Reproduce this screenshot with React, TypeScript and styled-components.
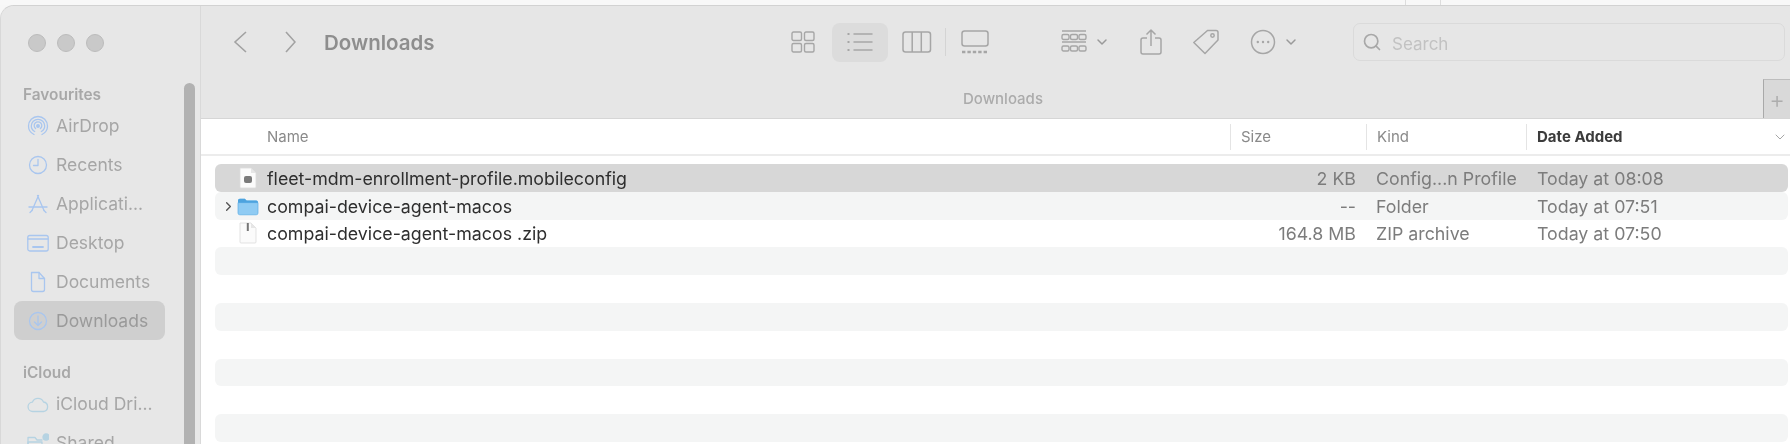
import React from 'react';
import styled, { createGlobalStyle } from 'styled-components';
import { ChevronDown, ChevronRight, Search } from 'lucide-react';

const GlobalStyle = createGlobalStyle`
    html, body {
        margin: 0;
        height: 100%;
        background: #f7f7f7;
        overflow: hidden;
    }
    body {
        font-family: Inter, "Liberation Sans", sans-serif;
    }
`;

const favourites = [
    { label: 'AirDrop', icon: 'airdrop' },
    { label: 'Recents', icon: 'recents' },
    { label: 'Applicati...', icon: 'apps' },
    { label: 'Desktop', icon: 'desktop' },
    { label: 'Documents', icon: 'doc' },
    { label: 'Downloads', icon: 'download', active: true },
];

const files = [
    { name: 'fleet-mdm-enrollment-profile.mobileconfig', size: '2 KB', kind: 'Config...n Profile', date: 'Today at 08:08', icon: 'config' },
    { name: 'compai-device-agent-macos', size: '--', kind: 'Folder', date: 'Today at 07:51', icon: 'folder' },
    { name: 'compai-device-agent-macos .zip', size: '164.8 MB', kind: 'ZIP archive', date: 'Today at 07:50', icon: 'zip' },
];

function SidebarIcon({ name }: { name: string }) {
    const blue = name === 'cloud' || name === 'shared' ? '#b6d3e2' : '#a9c6ef';
    return (
        <svg width="22" height="22" viewBox="0 0 22 22" fill="none" stroke={blue} strokeWidth="1.3" strokeLinecap="round" strokeLinejoin="round">
            {name === 'airdrop' && (
                <>
                    <path d="M7 19.5C3.5 17.8 1.5 14.5 1.5 11a9.5 9.5 0 0 1 19 0c0 3.5-2 6.8-5.5 8.500" />
                    <path d="M7.700 16.500C5.500 15.300 4.300 13.200 4.300 11a6.700 6.700 0 0 1 13.400 0c0 2.200-1.200 4.300-3.400 5.500" />
                    <path d="M8.600 13.600A3.800 3.800 0 1 1 13.400 13.600" />
                    <circle cx="11" cy="11" r="1.300" fill={blue} />
                </>
            )}
            {name === 'recents' && (
                <>
                    <circle cx="11" cy="11" r="8.500" />
                    <path d="M11 5.500V11.500H6.500" />
                </>
            )}
            {name === 'apps' && (
                <>
                    <path d="M11.500 2.500L5 17.500M10.500 2.500L17 17.500" />
                    <path d="M2 14H20" />
                    <path d="M3 19.500L5 17.500M19 19.500L17 17.500" />
                </>
            )}
            {name === 'desktop' && (
                <>
                    <rect x="0.800" y="3.500" width="20.400" height="15.500" rx="2" />
                    <path d="M1 7H21" />
                    <path d="M6 15H16" strokeWidth="1.800" />
                </>
            )}
            {name === 'doc' && (
                <>
                    <path d="M4.500 1.500H12L17.500 7.500V18.500a2 2 0 0 1-2 2H6.500a2 2 0 0 1-2-2Z" />
                    <path d="M12 1.500V7.500H17.500" />
                </>
            )}
            {name === 'download' && (
                <>
                    <circle cx="11" cy="11" r="8.500" />
                    <path d="M11 6V15.500M7.500 12L11 15.500L14.500 12" />
                </>
            )}
            {name === 'cloud' && <path d="M6 18.500a4.700 4.700 0 0 1-.500-9.400A6 6 0 0 1 16.500 9a4.800 4.800 0 0 1 0 9.500Z" />}
            {name === 'shared' && (
                <>
                    <path d="M1 19V5.500h7l2 2.500h5" />
                    <path d="M1 10H15V19H1Z" />
                    <circle cx="19" cy="5" r="3" fill={blue} />
                </>
            )}
        </svg>
    );
}

function FileIcon({ name }: { name: string }) {
    if (name === 'folder') {
        return (
            <svg width="22" height="20" viewBox="0 0 22 20">
                <path d="M1 4.500a1.800 1.800 0 0 1 1.800-1.800h5l1.800 1.800h9.600a1.800 1.800 0 0 1 1.800 1.800V17a1.800 1.800 0 0 1-1.800 1.800H2.800A1.800 1.800 0 0 1 1 17Z" fill="#8fcbf3" />
                <path d="M1 4.500a1.800 1.800 0 0 1 1.800-1.800h5l1.800 1.800h9.600a1.800 1.800 0 0 1 1.800 1.800V7H1Z" fill="#4da3de" />
                <path d="M1 17V6.600h20V17a1.800 1.800 0 0 1-1.800 1.800H2.800A1.800 1.800 0 0 1 1 17Z" fill="none" stroke="#5baee5" strokeWidth="0.700" />
            </svg>
        );
    }
    return (
        <svg width="20" height="22" viewBox="0 0 20 22">
            <path d="M2 1H13L18 6V20a1 1 0 0 1-1 1H3a1 1 0 0 1-1-1Z" fill="#fbfbfb" stroke="#dcdcdc" strokeWidth="0.800" />
            <path d="M13 1V6H18Z" fill="#e6e6e6" />
            {name === 'config' && <rect x="6" y="9" width="8" height="7" rx="2" fill="#7a7a7a" />}
            {name === 'zip' && <rect x="8.800" y="1" width="2" height="8" fill="#777" />}
        </svg>
    );
}

function App() {
    const emptyRows = Array.from({ length: 7 });
    return (
        <Page>
            <GlobalStyle />
            <TopEdge>
                <EdgeTick />
                <EdgeTick />
            </TopEdge>
            <Window>
                <Sidebar>
                    <Lights>
                        <Light />
                        <Light />
                        <Light />
                    </Lights>
                    <SectionTitle>Favourites</SectionTitle>
                    {favourites.map((item) => (
                        <SideItem key={item.label} $active={item.active}>
                            <SidebarIcon name={item.icon} />
                            <span>{item.label}</span>
                        </SideItem>
                    ))}
                    <SectionTitle $spaced>iCloud</SectionTitle>
                    <SideItem>
                        <SidebarIcon name="cloud" />
                        <span>iCloud Dri...</span>
                    </SideItem>
                    <SideItem>
                        <SidebarIcon name="shared" />
                        <span>Shared</span>
                    </SideItem>
                    <ScrollThumb />
                </Sidebar>
                <Main>
                    <Toolbar>
                        <NavButton $gap={16}>
                            <svg width="14" height="22" viewBox="0 0 14 22" fill="none" stroke="#a2a2a2" strokeWidth="1.600">
                                <path d="M13 1L2 11L13 21" />
                            </svg>
                        </NavButton>
                        <NavButton $gap={38}>
                            <svg width="11" height="22" viewBox="0 0 11 22" fill="none" stroke="#a2a2a2" strokeWidth="1.600">
                                <path d="M1 1L10 11L1 21" />
                            </svg>
                        </NavButton>
                        <WindowTitle>Downloads</WindowTitle>
                        <ViewSwitch>
                            <ViewButton>
                                <svg width="24" height="22" viewBox="0 0 24 22" fill="none" stroke="#a6a6a6" strokeWidth="1.400">
                                    <rect x="1" y="1" width="9.500" height="8.500" rx="1.500" />
                                    <rect x="13.500" y="1" width="9.500" height="8.500" rx="1.500" />
                                    <rect x="1" y="12.500" width="9.500" height="8.500" rx="1.500" />
                                    <rect x="13.500" y="12.500" width="9.500" height="8.500" rx="1.500" />
                                </svg>
                            </ViewButton>
                            <ViewButton $selected>
                                <svg width="26" height="20" viewBox="0 0 26 20" fill="none" stroke="#a6a6a6" strokeWidth="1.400">
                                    <path d="M6.500 2H25.500M6.500 10H25.500M6.500 18H25.500" />
                                    <path d="M0.500 2H2.500M0.500 10H2.500M0.500 18H2.500" strokeWidth="2" />
                                </svg>
                            </ViewButton>
                            <ViewButton>
                                <svg width="30" height="22" viewBox="0 0 30 22" fill="none" stroke="#a6a6a6" strokeWidth="1.500">
                                    <rect x="1" y="1" width="27.500" height="20" rx="2.500" />
                                    <path d="M10.200 1V21M19.300 1V21" />
                                </svg>
                            </ViewButton>
                            <ViewDivider />
                            <ViewButton>
                                <svg width="28" height="24" viewBox="0 0 28 24" fill="none" stroke="#a6a6a6" strokeWidth="1.500">
                                    <rect x="1" y="1" width="26" height="15" rx="2.500" />
                                    <path d="M1 22H27" strokeWidth="2.400" strokeDasharray="3.400 2" />
                                </svg>
                            </ViewButton>
                        </ViewSwitch>
                        <ActionGroup>
                            <ActionButton>
                                <svg width="26" height="24" viewBox="0 0 26 24" fill="none" stroke="#a6a6a6" strokeWidth="1.400">
                                    <path d="M1 1H25M1 12H25" />
                                    <rect x="1" y="4.500" width="7" height="5" rx="1.500" />
                                    <rect x="9.500" y="4.500" width="7" height="5" rx="1.500" />
                                    <rect x="18" y="4.500" width="7" height="5" rx="1.500" />
                                    <rect x="1" y="16" width="7" height="5" rx="1.500" />
                                    <rect x="9.500" y="16" width="7" height="5" rx="1.500" />
                                    <rect x="18" y="16" width="7" height="5" rx="1.500" />
                                </svg>
                                <ChevronDown size={16} color="#9a9a9a" strokeWidth={2.200} />
                            </ActionButton>
                            <ActionButton>
                                <svg width="22" height="26" viewBox="0 0 22 26" fill="none" stroke="#a6a6a6" strokeWidth="1.500" strokeLinejoin="round">
                                    <path d="M7 9H3a2 2 0 0 0-2 2V23a2 2 0 0 0 2 2H19a2 2 0 0 0 2-2V11a2 2 0 0 0-2-2H15" />
                                    <path d="M11 17V1.500M6.500 5.500L11 1L15.500 5.500" />
                                </svg>
                            </ActionButton>
                            <ActionButton>
                                <svg width="28" height="26" viewBox="0 0 28 26" fill="none" stroke="#a6a6a6" strokeWidth="1.500" strokeLinejoin="round">
                                    <path d="M15.500 1.500H24a2 2 0 0 1 2 2V11L13 24.500L1.800 13.500Z" />
                                    <circle cx="20.500" cy="6.500" r="1.700" />
                                </svg>
                            </ActionButton>
                            <ActionButton>
                                <svg width="26" height="26" viewBox="0 0 26 26" fill="none" stroke="#a6a6a6" strokeWidth="1.500">
                                    <circle cx="13" cy="13" r="11.500" />
                                    <circle cx="7.800" cy="13" r="1.200" fill="#a6a6a6" stroke="none" />
                                    <circle cx="13" cy="13" r="1.200" fill="#a6a6a6" stroke="none" />
                                    <circle cx="18.200" cy="13" r="1.200" fill="#a6a6a6" stroke="none" />
                                </svg>
                                <ChevronDown size={16} color="#9a9a9a" strokeWidth={2.200} />
                            </ActionButton>
                        </ActionGroup>
                        <SearchBox>
                            <Search size={20} color="#a8a8a8" strokeWidth={2} />
                            <SearchHint>Search</SearchHint>
                        </SearchBox>
                    </Toolbar>
                    <TabBar>
                        <TabTitle>Downloads</TabTitle>
                        <PlusTab>+</PlusTab>
                    </TabBar>
                    <HeaderRow>
                        <NameHead>Name</NameHead>
                        <SizeHead>Size</SizeHead>
                        <KindHead>Kind</KindHead>
                        <DateHead>Date Added<ChevronDown size={16} color="#a6a6a6" strokeWidth={1.500} /></DateHead>
                    </HeaderRow>
                    <List>
                        {files.map((file, i) => (
                            <Row key={file.name} $selected={i === 0} $striped={i === 1}>
                                <Disclosure>{file.icon === 'folder' && <ChevronRight size={15} color="#555" strokeWidth={2.200} />}</Disclosure>
                                <IconCell><FileIcon name={file.icon} /></IconCell>
                                <FileName>{file.name}</FileName>
                                <FileSize>{file.size}</FileSize>
                                <FileMeta>{file.kind}</FileMeta>
                                <FileMeta>{file.date}</FileMeta>
                            </Row>
                        ))}
                        {emptyRows.map((_, i) => (
                            <Row key={i} $striped={i % 2 === 0} />
                        ))}
                    </List>
                </Main>
            </Window>
        </Page>
    );
}

export default App;

const Page = styled.div`
    width: 1790px;
    height: 444px;
    overflow: hidden;
    filter: blur(0.45px);
`;

const TopEdge = styled.div`
    height: 5px;
    background: #f8f8f8;
    display: flex;
    gap: 34px;
    padding-left: 1405px;
`;

const EdgeTick = styled.div`
    width: 1px;
    background: #dddddd;
`;

const Window = styled.div`
    height: 439px;
    display: flex;
    overflow: hidden;
    background: #e6e6e6;
    border-top: 1px solid #d2d2d2;
    border-left: 1px solid #d8d8d8;
    border-top-left-radius: 14px;
    box-sizing: border-box;
`;

const Sidebar = styled.div`
    position: relative;
    flex-shrink: 0;
    width: 186px;
    padding-left: 13px;
    background: #e7e7e7;
    border-right: 1px solid #d9d9d9;
    color: #a6a6a6;
`;

const Lights = styled.div`
    display: flex;
    gap: 11px;
    padding: 28px 0 0 14px;
`;

const Light = styled.div`
    width: 16px;
    height: 16px;
    border-radius: 50%;
    background: #c9c9c9;
    border: 0.5px solid #bcbcbc;
`;

const SectionTitle = styled.div<{ $spaced?: boolean }>`
    font-size: 15.4px;
    font-weight: 600;
    line-height: 18px;
    margin: ${(p) => (p.$spaced ? '24px' : '34px')} 0 2px 9px;
    color: #a8a8a8;
`;

const SideItem = styled.div<{ $active?: boolean }>`
    width: 151px;
    height: 39px;
    display: flex;
    align-items: center;
    gap: 7px;
    padding-left: 13px;
    box-sizing: border-box;
    font-size: 17.5px;
    border-radius: 8px;
    background: ${(p) => (p.$active ? '#cfcfcf' : 'transparent')};
    color: ${(p) => (p.$active ? '#9a9a9a' : '#a6a6a6')};

    svg {
        flex-shrink: 0;
    }
`;

const ScrollThumb = styled.div`
    position: absolute;
    top: 77px;
    bottom: -10px;
    left: 183px;
    width: 11px;
    border-radius: 6px;
    background: #b2b2b2;
`;

const Main = styled.div`
    flex: 1;
    min-width: 0;
    display: flex;
    flex-direction: column;
    background: #ffffff;
`;

const Toolbar = styled.div`
    height: 56px;
    display: flex;
    align-items: center;
    background: #e6e6e6;
    padding: 16px 0 0 16px;
    box-sizing: border-box;
`;

const NavButton = styled.div<{ $gap?: number }>`
    display: flex;
    margin-left: ${(p) => p.$gap ?? 0}px;
`;

const WindowTitle = styled.div`
    width: 336px;
    margin-left: 28px;
    font-size: 20.5px;
    font-weight: 600;
    color: #8e8e8e;
`;

const ViewSwitch = styled.div`
    display: flex;
    align-items: center;
    margin-left: 131px;
`;

const ViewButton = styled.div<{ $selected?: boolean }>`
    height: 39px;
    width: ${(p) => (p.$selected ? '56px' : 'auto')};
    margin: 0 ${(p) => (p.$selected ? '14px' : '0')} 0 ${(p) => (p.$selected ? '17px' : '0')};
    display: flex;
    align-items: center;
    justify-content: center;
    border-radius: 8px;
    background: ${(p) => (p.$selected ? '#dcdcdc' : 'transparent')};
`;

const ViewDivider = styled.div`
    width: 1px;
    height: 28px;
    margin: 0 15px 0 13px;
    background: #d4d4d4;
`;

const ActionGroup = styled.div`
    display: flex;
    align-items: center;
    gap: 30px;
    margin-left: 72px;
`;

const ActionButton = styled.div`
    display: flex;
    align-items: center;
    gap: 7px;
`;

const SearchBox = styled.div`
    width: 432px;
    height: 38px;
    margin-left: 54px;
    display: flex;
    align-items: center;
    gap: 10px;
    padding-left: 8px;
    box-sizing: border-box;
    border: 1px solid #dadada;
    border-radius: 7px;
    font-size: 17px;
    color: #c2c2c2;
`;

const SearchHint = styled.span`
    padding-top: 3px;
`;

const TabBar = styled.div`
    height: 57px;
    display: flex;
    align-items: flex-end;
    background: #e6e6e6;
    border-bottom: 1px solid #d6d6d6;
    box-sizing: border-box;
`;

const TabTitle = styled.div`
    flex: 1;
    padding: 0 0 10px 42px;
    text-align: center;
    font-size: 15px;
    font-weight: 500;
    color: #ababab;
`;

const PlusTab = styled.div`
    width: 27px;
    height: 39px;
    display: flex;
    align-items: center;
    justify-content: center;
    background: #d9d9d9;
    border-top: 1px solid #bdbdbd;
    border-left: 1px solid #a9a9a9;
    box-sizing: border-box;
    font-size: 24px;
    font-weight: 300;
    color: #adadad;
`;

const HeaderRow = styled.div`
    height: 37px;
    display: grid;
    grid-template-columns: 1029px 136px 160px 1fr;
    align-items: center;
    border-bottom: 2px solid #ececec;
    box-sizing: border-box;
    font-size: 15px;
    color: #8a8a8a;
    background: #ffffff;
`;

const HeadCell = styled.div`
    height: 26px;
    display: flex;
    align-items: center;
    padding-left: 10px;
    border-left: 1px solid #e4e4e4;
`;

const NameHead = styled(HeadCell)`
    padding-left: 66px;
    border-left: 0;
`;

const SizeHead = styled(HeadCell)``;

const KindHead = styled(HeadCell)``;

const DateHead = styled(HeadCell)`
    justify-content: space-between;
    padding-right: 2px;
    font-weight: 700;
    color: #3c3c3c;
`;

const List = styled.div`
    flex: 1;
    display: flex;
    flex-direction: column;
    padding: 8px 2px 0 14px;
`;

const Row = styled.div<{ $selected?: boolean; $striped?: boolean }>`
    height: 27.8px;
    flex-shrink: 0;
    display: grid;
    grid-template-columns: 21px 24px 1fr 100px 161px 271px;
    align-items: center;
    border-radius: 6px;
    font-size: 17.8px;
    background: ${(p) => (p.$selected ? '#d7d7d7' : p.$striped ? '#f4f5f5' : 'transparent')};
`;

const Disclosure = styled.div`
    display: flex;
    justify-content: flex-end;
    padding-top: 1px;
`;

const IconCell = styled.div`
    display: flex;
    justify-content: center;
`;

const FileName = styled.div`
    padding: 1px 0 0 7px;
    color: #2e2e2e;
`;

const FileSize = styled.div`
    padding-top: 1px;
    text-align: right;
    color: #7c7c7c;
`;

const FileMeta = styled.div`
    padding: 1px 0 0 20px;
    color: #7c7c7c;
    white-space: nowrap;
`;
